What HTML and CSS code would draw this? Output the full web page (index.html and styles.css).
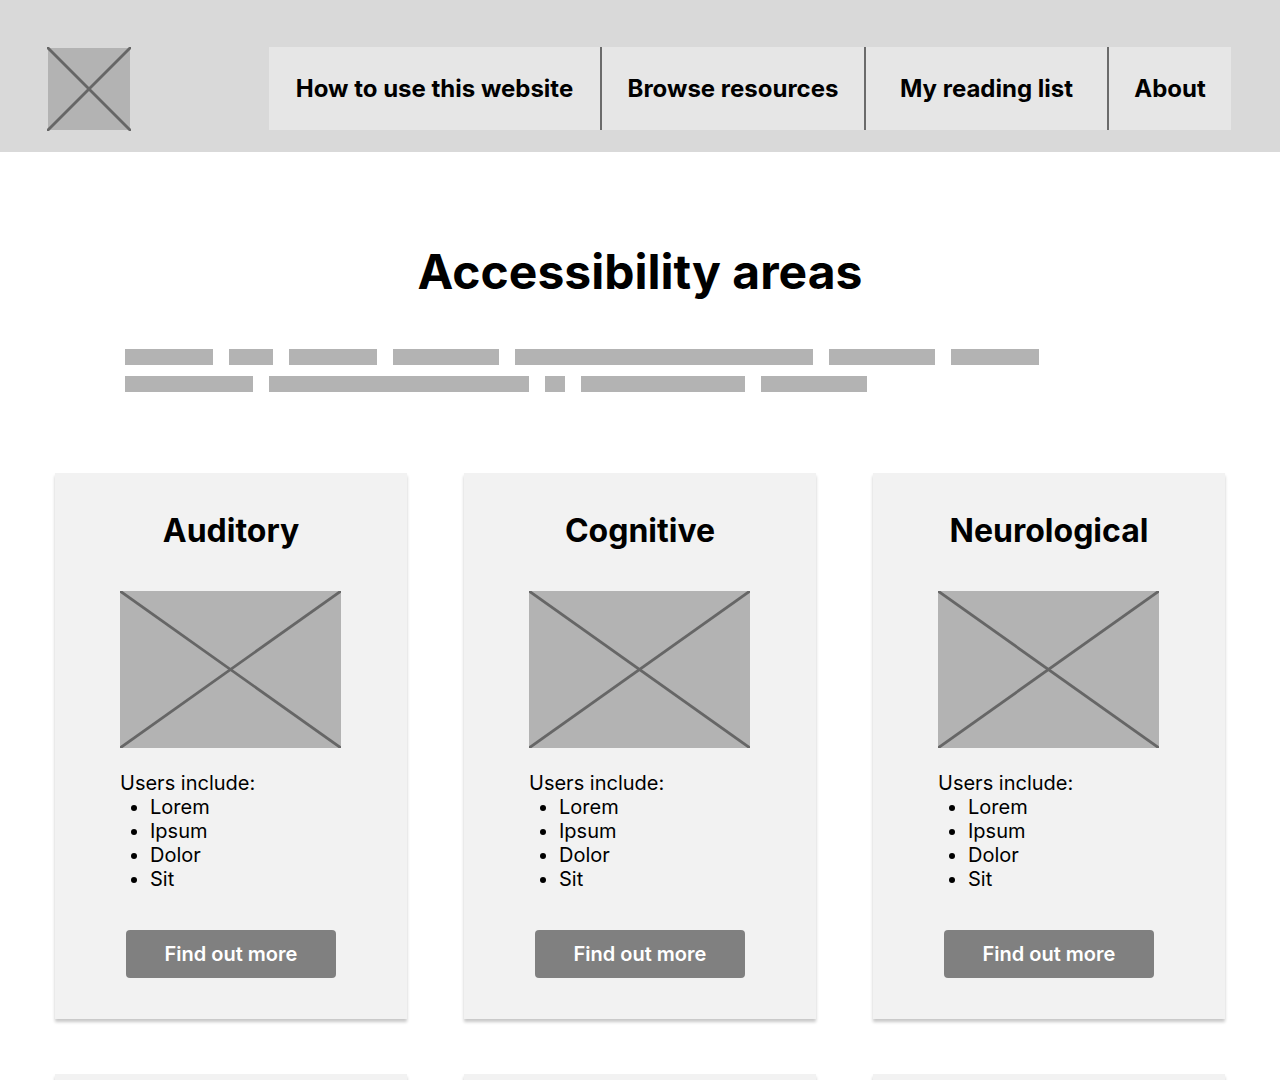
FILE: index.html
```html
<!DOCTYPE html>
<html lang="en">
<head>
<meta charset="utf-8">
<title>Accessibility areas</title>
<link rel="stylesheet" href="styles.css">
</head>
<body>
<header class="site-header">
  <div class="logo">
    <svg width="84" height="84" viewBox="0 0 84 84"><rect x="1" y="1" width="82" height="82" fill="#b3b3b3"/><line x1="0" y1="0" x2="84" y2="84" stroke="#666" stroke-width="2.8"/><line x1="84" y1="0" x2="0" y2="84" stroke="#666" stroke-width="2.8"/></svg>
  </div>
  <nav class="main-nav">
    <a class="nav-item nav-how" href="#">How to use this website</a>
    <a class="nav-item nav-browse" href="#">Browse resources</a>
    <a class="nav-item nav-list" href="#">My reading list</a>
    <a class="nav-item nav-about" href="#">About</a>
  </nav>
</header>
<main class="content">
  <h1 class="page-title">Accessibility areas</h1>
  <div class="intro">
    <div class="bar-row">
      <span class="bar w88"></span><span class="bar w44"></span><span class="bar w88"></span><span class="bar w106"></span><span class="bar w298"></span><span class="bar w106"></span><span class="bar w88"></span>
    </div>
    <div class="bar-row">
      <span class="bar w128"></span><span class="bar w260"></span><span class="bar w20"></span><span class="bar w164"></span><span class="bar w106"></span>
    </div>
  </div>
  <section class="cards">
    <article class="card">
      <h2 class="card-title">Auditory</h2>
      <svg class="card-img" width="221" height="157" viewBox="0 0 221 157"><rect width="221" height="157" fill="#b3b3b3"/><line x1="0" y1="0" x2="221" y2="157" stroke="#666" stroke-width="2.8"/><line x1="221" y1="0" x2="0" y2="157" stroke="#666" stroke-width="2.8"/></svg>
      <div class="card-body">
        <p class="users">Users include:</p>
        <ul class="user-list"><li>Lorem</li><li>Ipsum</li><li>Dolor</li><li>Sit</li></ul>
      </div>
      <a class="btn" href="#">Find out more</a>
    </article>
    <article class="card">
      <h2 class="card-title">Cognitive</h2>
      <svg class="card-img" width="221" height="157" viewBox="0 0 221 157"><rect width="221" height="157" fill="#b3b3b3"/><line x1="0" y1="0" x2="221" y2="157" stroke="#666" stroke-width="2.8"/><line x1="221" y1="0" x2="0" y2="157" stroke="#666" stroke-width="2.8"/></svg>
      <div class="card-body">
        <p class="users">Users include:</p>
        <ul class="user-list"><li>Lorem</li><li>Ipsum</li><li>Dolor</li><li>Sit</li></ul>
      </div>
      <a class="btn" href="#">Find out more</a>
    </article>
    <article class="card">
      <h2 class="card-title">Neurological</h2>
      <svg class="card-img" width="221" height="157" viewBox="0 0 221 157"><rect width="221" height="157" fill="#b3b3b3"/><line x1="0" y1="0" x2="221" y2="157" stroke="#666" stroke-width="2.8"/><line x1="221" y1="0" x2="0" y2="157" stroke="#666" stroke-width="2.8"/></svg>
      <div class="card-body">
        <p class="users">Users include:</p>
        <ul class="user-list"><li>Lorem</li><li>Ipsum</li><li>Dolor</li><li>Sit</li></ul>
      </div>
      <a class="btn" href="#">Find out more</a>
    </article>
    <article class="card card-next"></article>
    <article class="card card-next"></article>
    <article class="card card-next"></article>
  </section>
</main>
</body>
</html>
```

FILE: styles.css
```css
* { box-sizing: border-box; }
html, body { margin: 0; padding: 0; background: #fff; overflow: hidden; }
body {
  font-family: Inter, "Noto Sans", "Liberation Sans", sans-serif;
  color: #000;
  width: 1280px;
  height: 1080px;
}
.site-header {
  height: 152px;
  background: #d9d9d9;
  display: flex;
  align-items: flex-start;
  justify-content: space-between;
  padding: 47px 49px 0 47px;
}
.logo { width: 84px; height: 84px; }
.logo svg { display: block; }
.main-nav {
  display: flex;
  height: 83px;
  background: #e6e6e6;
}
.nav-item {
  display: flex;
  align-items: center;
  justify-content: center;
  height: 100%;
  font-size: 24px;
  font-weight: 700;
  color: #000;
  text-decoration: none;
  letter-spacing: 0;
}
.nav-item + .nav-item { border-left: 2px solid #6b6b6b; }
.nav-how { width: 331px; }
.nav-browse { width: 264px; }
.nav-list { width: 243px; }
.nav-about { width: 124px; }

.content { height: 928px; overflow: hidden; }
.page-title {
  margin: 91px 0 0;
  text-align: center;
  font-size: 48px;
  line-height: 58px;
  font-weight: 700;
}
.intro {
  margin: 48px 0 0 125px;
  display: flex;
  flex-direction: column;
  gap: 11px;
}
.bar-row { display: flex; gap: 16px; }
.bar { display: block; height: 16px; background: #b3b3b3; }
.w20 { width: 20px; } .w44 { width: 44px; } .w88 { width: 88px; } .w106 { width: 106px; }
.w128 { width: 128px; } .w164 { width: 164px; } .w260 { width: 260px; } .w298 { width: 298px; }

.cards {
  margin: 81px 0 0 55px;
  display: grid;
  grid-template-columns: repeat(3, 352px);
  column-gap: 57px;
  row-gap: 55px;
}
.card {
  background: #f2f2f2;
  box-shadow: 0 3px 3px rgba(0, 0, 0, 0.22);
  display: flex;
  flex-direction: column;
  align-items: center;
  padding: 38px 0 41px;
}
.card-next { height: 546px; }
.card-title {
  margin: 0;
  font-size: 32px;
  line-height: 40px;
  font-weight: 700;
}
.card-img { display: block; margin: 40px 1px 0 0; }
.card-body {
  width: 221px;
  margin: 23px 1px 0 0;
  font-size: 20px;
  line-height: 24px;
}
.users { margin: 0; }
.user-list { margin: 0; padding-left: 30px; }
.btn {
  margin-top: 39px;
  width: 210px;
  height: 48px;
  background: #808080;
  border-radius: 4px;
  color: #fff;
  font-size: 20px;
  font-weight: 600;
  text-decoration: none;
  display: flex;
  align-items: center;
  justify-content: center;
}
```
